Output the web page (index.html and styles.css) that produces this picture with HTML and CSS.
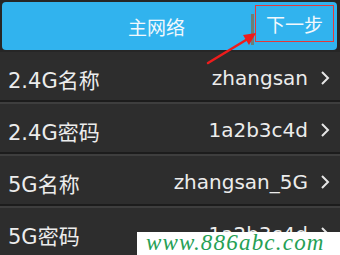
FILE: index.html
```html
<!DOCTYPE html>
<html>
<head>
<meta charset="utf-8">
<link rel="stylesheet" href="styles.css">
</head>
<body>
<div class="screen">
  <div class="header">
    <div class="title">主网络</div>
    <div class="divider"></div>
    <div class="next">下一步</div>
  </div>
  <div class="list">
    <div class="row"><span class="label">2.4G名称</span><span class="value">zhangsan</span><svg class="chev" width="10" height="16" viewBox="0 0 10 16"><polyline points="2,2 8,8 2,14" fill="none" stroke="#e6e6e6" stroke-width="2"/></svg></div>
    <div class="row"><span class="label">2.4G密码</span><span class="value">1a2b3c4d</span><svg class="chev" width="10" height="16" viewBox="0 0 10 16"><polyline points="2,2 8,8 2,14" fill="none" stroke="#e6e6e6" stroke-width="2"/></svg></div>
    <div class="row"><span class="label">5G名称</span><span class="value">zhangsan_5G</span><svg class="chev" width="10" height="16" viewBox="0 0 10 16"><polyline points="2,2 8,8 2,14" fill="none" stroke="#e6e6e6" stroke-width="2"/></svg></div>
    <div class="row"><span class="label">5G密码</span><span class="value">1a2b3c4d</span><svg class="chev" width="10" height="16" viewBox="0 0 10 16"><polyline points="2,2 8,8 2,14" fill="none" stroke="#e6e6e6" stroke-width="2"/></svg></div>
  </div>
  <svg class="arrow" width="340" height="80" viewBox="0 0 340 80">
    <line x1="208" y1="63" x2="246" y2="40" stroke="#ee1c1c" stroke-width="2.5" stroke-linecap="round"/>
    <polygon points="256,33 243,35 249,45" fill="#ee1c1c"/>
  </svg>
  <div class="watermark">www.886abc.com</div>
</div>
</body>
</html>
```
FILE: styles.css
```css
html, body {
  margin: 0;
  padding: 0;
  background: #262626;
}
.screen {
  position: relative;
  width: 340px;
  height: 255px;
  overflow: hidden;
  background: #262626;
  font-family: "DejaVu Sans", "Noto Sans CJK SC", sans-serif;
  color: #ececec;
}
.header {
  margin: 2px 3px 0 2px;
  height: 48px;
  background: #31b3ee;
  border-radius: 4px;
  display: flex;
  align-items: center;
}
.title {
  flex: 1;
  text-align: center;
  padding-left: 60px;
  font-size: 19px;
  color: #f2f8fc;
  font-family: "Noto Sans CJK SC", sans-serif;
}
.divider {
  width: 3px;
  height: 31px;
  margin-top: 6px;
  background: #6d7f78;
}
.next {
  width: 77px;
  height: 35px;
  margin: 0 3px 6px 1px;
  border: 1px solid #e5393a;
  display: flex;
  align-items: center;
  justify-content: center;
  font-size: 19px;
  color: #f2f8fc;
  font-family: "Noto Sans CJK SC", sans-serif;
}
.list {
  margin-top: 2px;
}
.row {
  height: 48px;
  display: flex;
  align-items: center;
  padding: 0 10px 0 8px;
  background: #2d2d2d;
  border-bottom: 2px solid #1c1c1c;
  box-shadow: 0 2px 0 #3e3e3e;
  margin-bottom: 2px;
  font-size: 21px;
}
.label {
  flex: 1;
  padding-top: 5px;
}
.value {
  font-size: 20px;
  padding-top: 3px;
  margin-right: 12px;
}
.chev {
  display: block;
  margin-top: 4px;
}
.arrow {
  position: absolute;
  left: 0;
  top: 0;
}
.watermark {
  position: absolute;
  left: 137px;
  top: 232px;
  width: 203px;
  height: 23px;
  background: #ffffff;
  color: #25a055;
  font-family: "Liberation Serif", serif;
  font-style: italic;
  font-size: 23px;
  line-height: 22px;
  letter-spacing: 1.2px;
  padding-left: 9px;
  box-sizing: border-box;
  overflow: hidden;
  white-space: nowrap;
}
```
